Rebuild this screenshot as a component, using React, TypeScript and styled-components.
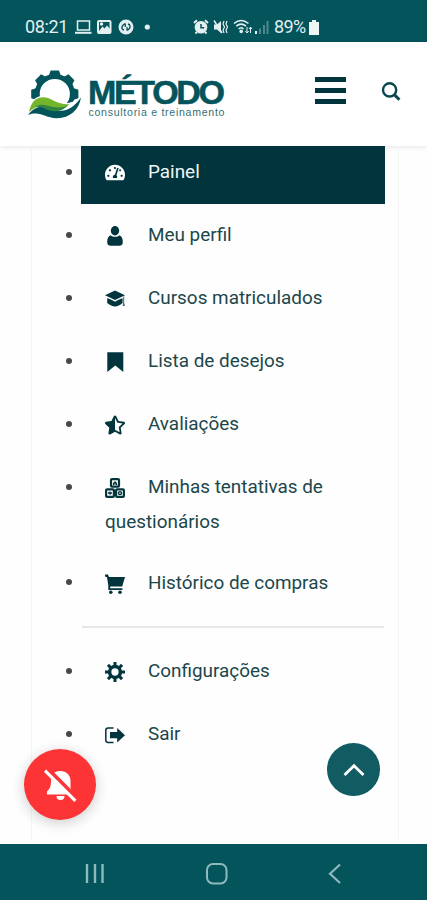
import React from "react";
import styled, { createGlobalStyle, css } from "styled-components";
import {
  FaTachometerAlt,
  FaStarHalfAlt,
} from "react-icons/fa";

const teal = "#04545b";
const dark = "#01343c";

const GlobalStyle = createGlobalStyle`
  * { box-sizing: border-box; }
  body { margin: 0; background: #fefefe; font-family: Roboto, sans-serif; }
`;

const Screen = styled.div`
  position: relative;
  display: flex;
  flex-direction: column;
  width: 427px;
  height: 900px;
  overflow: hidden;
  background: #fefefe;
`;

const StatusBar = styled.div`
  display: flex;
  align-items: center;
  flex: 0 0 42px;
  padding: 12px 0 0 25px;
  background: ${teal};
  color: #e3eff0;
  font-size: 18px;
  line-height: 30px;
`;

const Clock = styled.span`
  width: 50px;
  letter-spacing: -0.35px;
`;

const Battery = styled.span`
  width: 34px;
  letter-spacing: -0.6px;
`;

const StatusIcons = styled.svg`
  display: block;
  flex: none;
`;

const Header = styled.header`
  display: flex;
  align-items: flex-start;
  flex: 0 0 104px;
  padding-left: 26px;
  background: #fff;
  box-shadow: 0 1px 5px rgba(0, 0, 0, 0.1);
`;

const Logo = styled.svg`
  display: block;
  margin-top: 24px;
  flex: none;
`;

const MenuButton = styled.button`
  display: flex;
  flex-direction: column;
  gap: 6.5px;
  margin: 35px 0 0 84px;
  padding: 0;
  border: 0;
  background: none;
`;

const MenuLine = styled.span`
  width: 31px;
  height: 4.5px;
  background: ${dark};
`;

const SearchButton = styled.button`
  margin: 39px 0 0 35px;
  padding: 0;
  border: 0;
  background: none;
  line-height: 0;
`;

const Content = styled.main`
  flex: 1;
  min-height: 0;
  overflow: hidden;
  padding-left: 31px;
`;

const Panel = styled.div`
  width: 368px;
  height: 698px;
  border: solid #f3f4f4;
  border-width: 0 1px;
`;

const List = styled.ul<{ $first?: boolean }>`
  list-style: none;
  margin: ${(p) => (p.$first ? "-5px" : "12px")} 0 0;
  padding: 0 13px 0 34px;
`;

const Item = styled.li<{ $wrapped?: boolean }>`
  display: flex;
  margin-bottom: ${(p) => (p.$wrapped ? "-2px" : "0")};
`;

const Bullet = styled.span`
  flex: none;
  width: 6px;
  height: 6px;
  margin: 28.2px 9px 0 0;
  border-radius: 50%;
  background: #484848;
`;

const Link = styled.a<{ $active?: boolean }>`
  flex: 1;
  padding: 14.4px 24px;
  color: #1b474b;
  font-size: 18.9px;
  line-height: 34.2px;
  ${(p) =>
    p.$active &&
    css`
      background: ${dark};
      color: #f0f5f5;
    `}
`;

const IconSlot = styled.span<{ $active?: boolean }>`
  display: inline-flex;
  align-items: center;
  justify-content: center;
  width: 20px;
  height: 22px;
  margin-right: 23px;
  vertical-align: -5px;
  color: ${(p) => (p.$active ? "#fff" : dark)};
`;

const Divider = styled.hr`
  width: 302px;
  height: 2px;
  margin: 12px 0 0 50px;
  border: 0;
  background: #e6e8e8;
`;

const Round = styled.button`
  position: absolute;
  display: flex;
  align-items: center;
  justify-content: center;
  padding: 0;
  border: 0;
  border-radius: 50%;
  color: #fff;
`;

const MuteButton = styled(Round)`
  left: 24px;
  top: 749px;
  width: 72px;
  height: 71px;
  background: #fd3436;
  box-shadow: 0 3px 14px rgba(0, 0, 0, 0.2);
`;

const TopButton = styled(Round)`
  left: 327px;
  top: 743px;
  width: 53px;
  height: 53px;
  background: #105c62;
`;

const NavBar = styled.nav`
  position: relative;
  display: flex;
  align-items: center;
  justify-content: space-between;
  flex: 0 0 56px;
  padding: 3px 85px 0 84px;
  background: ${teal};
`;

const svg18 = { width: 20, height: 20, viewBox: "0 0 20 20" };

function UserIcon() {
  return (
    <svg {...svg18} fill="currentColor">
      <ellipse cx="10" cy="4.8" rx="4.2" ry="4.7" />
      <path d="M5.6 9.2C7.4 11.4 12.6 11.4 14.4 9.2 16.8 10.4 17.8 12.5 17.8 16 17.8 18.8 16.5 19.8 14 19.8H6C3.5 19.8 2.2 18.8 2.2 16 2.2 12.5 3.2 10.4 5.6 9.2Z" />
    </svg>
  );
}

function CapIcon() {
  return (
    <svg {...svg18} fill="currentColor">
      <path d="M10 1.5L20 6.2 10 11 0 6.2Z" />
      <path d="M2.2 9.3C4.5 9.8 7 11.2 10 12.8 13 11.2 15.5 9.8 17.6 9.3V14C15 16 12.5 17.6 10 17.6 7.5 17.6 5 16 2.2 14Z" />
      <path d="M18.2 7.5H19.2V14L19.9 17H17.6L18.2 14Z" opacity=".75" />
    </svg>
  );
}

function BookmarkIcon() {
  return (
    <svg {...svg18} fill="currentColor">
      <path d="M2.3 0.3H18.3V20L10.3 13.6 2.3 20Z" />
    </svg>
  );
}

function CartIcon() {
  return (
    <svg {...svg18} fill="currentColor">
      <path d="M0 .5H3L4 3H20L17.2 12.6H5.2V14.2H17.4V16H3.3V11.5L2 3.2 0 2.4Z" />
      <circle cx="5.8" cy="18.2" r="1.8" />
      <circle cx="15" cy="18.2" r="1.8" />
    </svg>
  );
}

function QuizIcon() {
  return (
    <svg {...svg18} fill="none" stroke="currentColor" strokeWidth="2.2">
      <rect x="6" y="1.1" width="8" height="7.6" rx="1" />
      <rect x="1.1" y="11.3" width="7.8" height="7.6" rx="1" />
      <rect x="11.1" y="11.3" width="7.8" height="7.6" rx="1" />
      <path d="M8.5 7V5.5L10 3.8 11.5 5.5V7M8.5 6H11.5" strokeWidth="1.2" />
      <path d="M3 15H7M5 13.4V16.7" strokeWidth="1.3" />
      <circle cx="15" cy="15.1" r="1.5" strokeWidth="1.4" />
    </svg>
  );
}

function GearIcon() {
  return (
    <svg {...svg18} fill="none" stroke="currentColor">
      <circle cx="10" cy="10" r="5.4" strokeWidth="3.5" />
      {[0, 45, 90, 135, 180, 225, 270, 315].map((a) => (
        <path key={a} d="M10 0V4" strokeWidth="3" transform={`rotate(${a} 10 10)`} />
      ))}
    </svg>
  );
}

function SignOutIcon() {
  return (
    <svg {...svg18} fill="currentColor">
      <path d="M8.5 3H3.2Q.8 3 .8 5.4V15Q.8 17.4 3.2 17.4H8.5" fill="none" stroke="currentColor" strokeWidth="1.5" />
      <path d="M5 7.1H12.2V3L20 10.2 12.2 17.4V13.3H5Z" />
    </svg>
  );
}

type Entry = {
  label: string;
  icon: React.ReactNode;
  active?: boolean;
  wrapped?: boolean;
};

const mainItems: Entry[] = [
  { label: "Painel", icon: <FaTachometerAlt size={21} />, active: true },
  { label: "Meu perfil", icon: <UserIcon /> },
  { label: "Cursos matriculados", icon: <CapIcon /> },
  { label: "Lista de desejos", icon: <BookmarkIcon /> },
  { label: "Avaliações", icon: <FaStarHalfAlt size={20} /> },
  { label: "Minhas tentativas de questionários", icon: <QuizIcon />, wrapped: true },
  { label: "Histórico de compras", icon: <CartIcon /> },
];

const accountItems: Entry[] = [
  { label: "Configurações", icon: <GearIcon /> },
  { label: "Sair", icon: <SignOutIcon /> },
];

function MenuItem({ label, icon, active, wrapped }: Entry) {
  return (
    <Item $wrapped={wrapped}>
      <Bullet />
      <Link $active={active}>
        <IconSlot $active={active}>{icon}</IconSlot>
        {label}
      </Link>
    </Item>
  );
}

function BrandLogo() {
  return (
    <Logo width="205" height="60" viewBox="26 66 205 60">
      <g fill="none" stroke={teal}>
        <circle cx="54.8" cy="94" r="17.6" strokeWidth="5" />
        {[-135, -90, -45, 0, 45, 90].map((a) => (
          <path key={a} d="M48.8 75.8L50.6 70.4H59L60.8 75.8Z" fill={teal} stroke="none" transform={`rotate(${a} 54.8 94)`} />
        ))}
      </g>
      <path d="M26 117C29 104 33 96 43 96 54 96 60 104 68 103 74 102 77 99 82 97 77 110 70 119 56 120 43 121 38 111 26 117Z" fill="#fff" />
      <path d="M28 115C36 105 45 105 54 109.5 64 113 73 109 81 97.5 79 110 70 118 57 118.2 45 118.5 41 110.5 28 115Z" fill={teal} />
      <path d="M29 112C31 102 36 97.3 43 97.3 52 97.3 57 105.5 69 104 63 110 56 109.5 50 108 41 105.5 36 106 29 112Z" fill="#73b62b" />
      <path d="M35 106.5C44 102 50 107.5 58 107.5 63 107.5 66 106.5 69 104 62 113 52 112 47 109.5 43 107.5 40 106.5 35 106.5Z" fill="#318342" />
      <text x="88" y="103.6" fill={teal} stroke={teal} strokeWidth=".6" fontFamily="Liberation Sans, sans-serif" fontWeight="700" fontSize="34" textLength="137" lengthAdjust="spacing">
        MÉTODO
      </text>
      <text x="88.5" y="116.3" fill="#376f75" fontFamily="Liberation Sans, sans-serif" fontSize="10.6" textLength="136" lengthAdjust="spacing">
        consultoria e treinamento
      </text>
    </Logo>
  );
}

export default function App() {
  return (
    <Screen>
      <GlobalStyle />
      <StatusBar>
        <Clock>08:21</Clock>
        <StatusIcons width="199" height="30" viewBox="75 12 199 30" fill="none" stroke="#e3eff0" strokeWidth="1.5">
          <rect x="77.5" y="21" width="12" height="9" />
          <path d="M75 32.8H91.5" strokeWidth="2" />
          <rect x="98" y="21" width="12.5" height="12" rx="1" strokeWidth="2" />
          <path d="M99 31L102.5 26.5 104.5 28.5 107 25.5 110 29V32H99Z" fill="#e3eff0" stroke="none" />
          <circle cx="101.5" cy="24" r="1" fill="#e3eff0" />
          <circle cx="126" cy="27" r="7.5" fill="#e3eff0" stroke="none" />
          <path d="M125.3 23.5C120.5 26 121.5 29.5 124 30M125.3 23.5V27M127 30.5C131.5 28 130.5 24.5 128 24M127 30.5V27" stroke={teal} strokeWidth="1.3" />
          <circle cx="147.3" cy="27" r="2.6" fill="#e3eff0" stroke="none" />
          <circle cx="201" cy="27.3" r="6.3" fill="#e3eff0" stroke="none" />
          <path d="M201 24V27.8H204.2" stroke={teal} />
          <path d="M194 23L197 20.3M208 23L205 20.3M197 32L195.5 33.5M205 32L206.5 33.5" strokeWidth="2" />
          <path d="M214 24.5H217L221 21V33L217 29.5H214Z" fill="#e3eff0" stroke="none" />
          <path d="M214 20.5L222 33" />
          <path d="M224 21L223 24 224.5 27 223 30 224 33M227 21L226 24 227.5 27 226 30 227 33" strokeWidth="1.2" />
          <path d="M234 23.5Q241 17.5 248.5 23.5M236.3 26.2Q241 22 246 26.2M238.7 29Q241 26.5 243.5 29" strokeWidth="1.6" />
          <circle cx="241.2" cy="31.4" r="1.8" fill="#e3eff0" stroke="none" />
          <path d="M247 27V33M245.3 31L247 33 248.7 31M250.5 33V27M249 29L250.5 27 252 29" strokeWidth="1" />
          <path d="M256 31V34" strokeWidth="2" />
          <path d="M260 28.5V34M264 25V34M267.5 21V34" stroke="#4c898e" strokeWidth="2" />
        </StatusIcons>
        <Battery>89%</Battery>
        <StatusIcons width="12" height="18" viewBox="0 0 12 18" fill="#edf5f5">
          <path d="M4 2H8V4H11V17H1V4H4Z" />
        </StatusIcons>
      </StatusBar>
      <Header>
        <BrandLogo />
        <MenuButton aria-label="Menu">
          <MenuLine />
          <MenuLine />
          <MenuLine />
        </MenuButton>
        <SearchButton aria-label="Buscar">
          <svg width="21" height="21" viewBox="0 0 21 21" fill="none" stroke="#0b474e">
            <circle cx="8.6" cy="8.9" r="6.6" strokeWidth="2.4" />
            <path d="M13.3 13.6L18.4 18.7" strokeWidth="3" />
          </svg>
        </SearchButton>
      </Header>
      <Content>
        <Panel>
          <List $first>
            {mainItems.map((item) => (
              <MenuItem key={item.label} {...item} />
            ))}
          </List>
          <Divider />
          <List>
            {accountItems.map((item) => (
              <MenuItem key={item.label} {...item} />
            ))}
          </List>
        </Panel>
      </Content>
      <NavBar>
        <svg width="21" height="22" viewBox="0 0 21 22" stroke="#8eb9bd" strokeWidth="2.4">
          <path d="M3 1V20M11 1V20M18.5 1V20" />
        </svg>
        <svg width="22" height="22" viewBox="0 0 22 22" fill="none" stroke="#8eb9bd" strokeWidth="2">
          <rect x="1" y="1" width="19.5" height="19.5" rx="6" />
        </svg>
        <svg width="14" height="22" viewBox="0 0 14 22" fill="none" stroke="#8eb9bd" strokeWidth="2.2">
          <path d="M12 1.5L2 10.7 12 20" />
        </svg>
      </NavBar>
      <MuteButton aria-label="Notificações">
        <svg width="34" height="34" viewBox="0 0 34 34">
          <path d="M17 3C24 3 27.5 7.5 27.5 13V18.5C27.5 20.5 28 22 29 23.5V26.5H4V23.5C7 21 8 18 8 12.5 8 7 11 3 17 3Z" fill="#fff" />
          <path d="M13.5 28H21.5Q21.5 32 17.5 32T13.5 28Z" fill="#fff" />
          <path d="M5 2.5L35 32.5" stroke="#fd3436" strokeWidth="6" />
          <path d="M2 2.6L32.4 32.8" stroke="#fff" strokeWidth="3.2" />
        </svg>
      </MuteButton>
      <TopButton aria-label="Voltar ao topo">
        <svg width="22" height="14" viewBox="0 0 22 14" fill="none" stroke="#fff" strokeWidth="2.7">
          <path d="M1.5 12L11 2.7 20.5 12" />
        </svg>
      </TopButton>
    </Screen>
  );
}
